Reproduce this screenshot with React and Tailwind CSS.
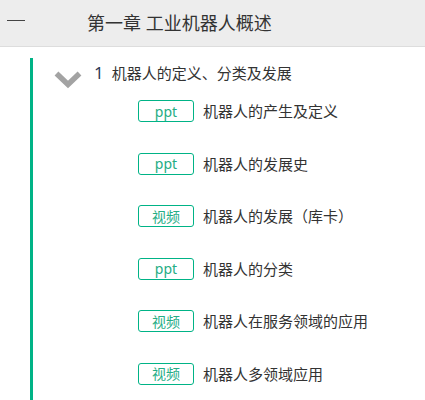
import React from 'react';

const items = [
    { type: 'ppt', title: '机器人的产生及定义' },
    { type: 'ppt', title: '机器人的发展史' },
    { type: '视频', title: '机器人的发展（库卡）' },
    { type: 'ppt', title: '机器人的分类' },
    { type: '视频', title: '机器人在服务领域的应用' },
    { type: '视频', title: '机器人多领域应用' },
];

const Chevron = () => (
    <svg width="28" height="19" viewBox="0 0 28 19" className="shrink-0">
        <polyline points="2.5,3.5 14,14.5 25.5,3.5" fill="none" stroke="#a3a3a3" strokeWidth="5.5" />
    </svg>
);

export default function App() {
    return (
        <div className="w-[425px] h-[400px] overflow-hidden bg-white text-[#333] font-['Noto_Sans','Noto_Sans_CJK_SC',sans-serif]">
            {/* Chapter header */}
            <div className="h-[47px] bg-[#ededed] border-b border-[#dddddd] flex items-center">
                <div className="ml-[7px] mb-[5px] w-[18px] h-[1px] bg-[#444]" />
                <div className="ml-[62px] text-[18px] leading-[24px] text-[#333]">第一章 工业机器人概述</div>
            </div>

            {/* Section */}
            <div className="ml-[30px] mt-[11px] border-l-[3px] border-[#00b386] pb-[40px]">
                <div className="flex items-start pt-[5px]">
                    <div className="ml-[21px] mt-[7px]">
                        <Chevron />
                    </div>
                    <span className="ml-[12px] text-[17px] leading-[20px] text-[#2d3a55]">1</span>
                    <span className="ml-[8px] text-[15px] leading-[20px]">机器人的定义、分类及发展</span>
                </div>

                <div className="flex flex-col gap-[30.6px] mt-[11px] pl-[105px]">
                    {items.map((item, i) => (
                        <div key={i} className="flex items-center h-[22px]">
                            <span className="w-[56px] h-[22px] flex items-center justify-center border border-[#00b386] rounded-[3px] text-[14px] text-[#25ad85]">
                                {item.type}
                            </span>
                            <span className="ml-[9px] text-[15px] leading-[20px]">{item.title}</span>
                        </div>
                    ))}
                </div>
            </div>
        </div>
    );
}
